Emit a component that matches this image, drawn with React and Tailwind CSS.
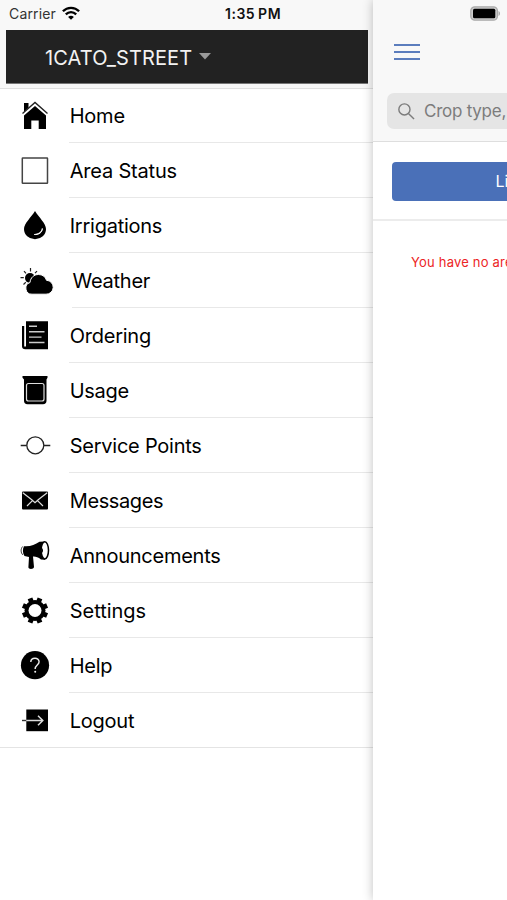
import React from 'react';

const icons = {
  home: (
    <>
      <path d="M24 15h4.500v5L24 24zM24 41V27.500L35 18l11 9.500V41h-7.300v-8.500h-7.400V41z" />
      <path d="M22.500 25.500 35 14.500l12.500 11" fill="none" stroke="#222" strokeWidth="1.400" />
    </>
  ),
  square: <rect x="22.300" y="15" width="25.200" height="25.200" rx=".5" fill="none" stroke="#444" strokeWidth="1.500" />,
  drop: (
    <>
      <path d="M35 13.500C31 20 24 26 24 31.500a11 10.200 0 0 0 22 0C46 26 39 20 35 13.500z" transform="translate(0 -.5)" />
      <path d="M42.300 30.500c-.3 3.300-3.500 5.600-8 6 4.500.5 8-2 8-6z" fill="#fff" stroke="#fff" strokeWidth=".9" />
    </>
  ),
  weather: (
    <>
      <circle cx="30" cy="25" r="5" />
      <path d="M30.500 15v3.500M24 18.200l2 2.200M37 18.200l-2 2M20.500 24.700h3.300M23.500 31.500l2.300-2.200" stroke="#222" strokeWidth="1.200" />
      <path d="M32 41.200a6 6 0 0 1-2-11.700c.5-5 4-8 8.500-8 4 0 7 2.300 8 5.800a6.900 6.900 0 0 1-.5 13.900z" stroke="#fff" strokeWidth="1" />
    </>
  ),
  order: (
    <>
      <path d="M26 13.300h22v28H25.200c-2 0-3.200-1-3.200-3V18h2.200v20.500H26z" />
      <path d="M29 18.300h8M29 23.700h15.500M29 29.100h12.500M29 34.500h15.500" stroke="#ccc" strokeWidth="1.400" />
    </>
  ),
  usage: (
    <>
      <path d="M22.500 13h25v1.800L46.500 16.500v21.300c0 2.300-1.200 3.500-3.500 3.500H27.500c-2.300 0-3.500-1.200-3.500-3.500V16.500L22.500 14.800z" />
      <rect x="26.500" y="20.500" width="17.500" height="17.500" rx="2" fill="none" stroke="#ddd" strokeWidth="1.200" />
    </>
  ),
  service: (
    <g fill="none" stroke="#222" strokeWidth="1.300">
      <circle cx="35.300" cy="27.300" r="8.500" />
      <path d="M20.700 27.500h6M44 27.500h6.300" />
    </g>
  ),
  mail: (
    <>
      <rect x="22" y="18.500" width="26" height="18" rx="1" />
      <path d="m22.800 19.800 9 7 3.200 3 3.200-3 9-7M27 33l5.200-5.200M43 33l-5.200-5.200" fill="none" stroke="#ddd" strokeWidth="1.200" />
    </>
  ),
  horn: (
    <>
      <path d="M24 18.200c6 .6 11-1.400 15.500-4.400l5.500-.3v18.200l-4-.2c-3-2.500-5.500-3.200-8-3l1 10.500c0 2.300-5.600 2.700-5.600.2L29 29l-4.500-1c-2-3-2-7-.5-9.800z" />
      <ellipse cx="44.800" cy="22.300" rx="3.700" ry="8.600" fill="#fff" stroke="#000" strokeWidth="1.500" />
      <path d="M22.600 18.500c-2 2.500-1.900 6 .1 8.300" stroke="#333" fill="none" />
      <path d="M41.500 19.800c2 1 2 4.500 0 5.500z" fill="#000" />
    </>
  ),
  gear: (
    <>
      <g stroke="#000" strokeWidth="5">
        <path d="m30 15.400 10 24.200M40 15.400 30 39.600M22.900 22.500l24.200 10M22.900 32.500l24.200-10" />
      </g>
      <circle cx="35" cy="27.500" r="10.500" />
      <circle cx="35" cy="27.500" r="6.500" fill="#fff" />
    </>
  ),
  help: (
    <>
      <circle cx="35" cy="27.200" r="14.100" />
      <path d="M30.800 24c0-5 8.300-5 8.300-.2 0 3.300-4 3.200-4 7.200" fill="none" stroke="#eee" strokeWidth="1.400" />
      <circle cx="35.200" cy="33.800" r="1" fill="#eee" />
    </>
  ),
  logout: (
    <>
      <rect x="26.300" y="16.500" width="21.700" height="21.700" />
      <path d="M22 27.500h4.300" stroke="#333" strokeWidth="1.400" />
      <path d="M26.300 27.500H43M38 22.800l4.800 4.700-4.800 4.700" fill="none" stroke="#ddd" strokeWidth="1.500" />
    </>
  ),
};

const items = [
  ['Home', 'home', 'tracking-[-0.25px]'],
  ['Area Status', 'square', 'tracking-[-0.2px]'],
  ['Irrigations', 'drop', 'tracking-[-0.25px]'],
  ['Weather', 'weather', 'tracking-[-0.25px]'],
  ['Ordering', 'order', 'tracking-[-0.25px]'],
  ['Usage', 'usage', 'tracking-[-0.3px]'],
  ['Service Points', 'service', 'tracking-[-0.25px]'],
  ['Messages', 'mail', 'tracking-[-0.4px]'],
  ['Announcements', 'horn', 'tracking-[-0.25px]'],
  ['Settings', 'gear', 'tracking-[-0.05px]'],
  ['Help', 'help', 'tracking-[-0.25px]'],
  ['Logout', 'logout', 'tracking-[-0.25px]'],
];

function MenuRow({ label, icon, tracking, last }) {
  const shifted = icon === 'weather';
  return (
    <li className={`flex h-[55px] ${last ? 'border-b border-[#e4e4e4]' : ''}`}>
      <svg viewBox="0 0 56 55" className={`h-[55px] w-14 shrink-0 ${shifted ? 'mr-4' : 'mr-[13px]'}`}>{icons[icon]}</svg>
      <span className={`flex flex-1 items-center whitespace-nowrap pt-[2px] text-[20px] ${shifted ? 'pl-[0.5px]' : 'pl-[0.75px]'} ${tracking} ${last ? '' : 'border-b border-[#e8e8e8]'}`}>
        {label}
      </span>
    </li>
  );
}

function Menu() {
  return (
    <aside className="flex w-[373px] shrink-0 flex-col bg-white">
      <header className="h-[89px] border-b border-[#e0e0e0] bg-[#f8f8f8]">
        <div className="flex h-[30px] items-center pb-[3px] pl-[9px]">
          <span className="w-[53px] whitespace-nowrap text-[14px] tracking-[0.15px] text-[#333]">Carrier</span>
          <svg viewBox="0 0 18 14" className="mb-px h-[14px] w-[18px]" fill="none" stroke="#000" strokeWidth="2.300">
            <path d="M.9 5.300c4.500-4.600 11.700-4.600 16.200 0M3.800 8.400c3-3 7.400-3 10.400 0" />
            <path d="M9 13.800 6.100 10.900c1.700-1.500 4.100-1.500 5.800 0z" fill="#000" stroke="none" />
          </svg>
          <span className="ml-[145px] whitespace-nowrap text-[14px] font-semibold tracking-[0.5px] text-[#111] [word-spacing:-1px]">1:35 PM</span>
        </div>
        <div className="ml-[6px] mr-[5px] flex h-[54px] items-center border-b border-[#777] bg-[#222] pl-[39px]">
          <span className="w-[147px] whitespace-nowrap pt-[2px] text-[20px] tracking-[0.1px] text-[#f2f2f2]">1CATO_STREET</span>
          <svg viewBox="0 0 12 7" className="mb-px ml-[7px] h-[7px] w-3" fill="#999"><path d="M0 0h12L6 6.500z" /></svg>
        </div>
      </header>
      <ul className="-mt-px text-black">
        {items.map(([label, icon, tracking], i) => (
          <MenuRow key={label} label={label} icon={icon} tracking={tracking} last={i === items.length - 1} />
        ))}
      </ul>
    </aside>
  );
}

function Areas() {
  return (
    <main className="z-10 flex w-[134px] shrink-0 flex-col bg-white shadow-[0_0_10px_rgba(0,0,0,0.25)]">
      <header className="flex h-[142px] flex-col border-b border-[#dedede] bg-[#f8f8f8]">
        <div className="flex h-[26px] items-center justify-end pr-[6px]">
          <svg viewBox="0 0 31 15" className="h-[15px] w-[31px]">
            <rect x=".8" y=".8" width="26.600" height="13.400" rx="4" fill="#ccc" stroke="#aaa" strokeWidth="1.300" />
            <rect x="3" y="2.700" width="22.300" height="9.600" rx="1.500" />
            <path d="M28.500 5c2 .7 2 4.300 0 5z" fill="#aaa" />
          </svg>
        </div>
        <div className="ml-[21px] mt-[18px] flex h-4 w-[26px] flex-col justify-between">
          <i className="h-[2px] bg-[#5b7dbd]" />
          <i className="h-[2px] bg-[#5b7dbd]" />
          <i className="h-[2px] bg-[#5b7dbd]" />
        </div>
        <div className="ml-[14px] mt-[33px] flex h-9 items-center overflow-hidden rounded-l-[7px] bg-[#e5e5e5] pl-[11px] text-[#7c7c7c]">
          <svg viewBox="0 0 18 18" className="size-[17px] shrink-0" fill="none" stroke="#7c7c7c" strokeWidth="1.500">
            <circle cx="6.800" cy="6.800" r="5.900" /><path d="m11 11 6 6" />
          </svg>
          <span className="ml-[9px] whitespace-nowrap pt-[2px] text-[17px] tracking-[-0.25px]">Crop type,</span>
        </div>
      </header>
      <section className="h-[79px] border-b-2 border-[#ececec] pl-[19px] pt-5">
        <div className="flex h-[39px] items-center overflow-hidden rounded-l-[4px] bg-[#4a70b8] pb-px pl-[103.5px] text-[16px] text-white">
          <span className="whitespace-nowrap">List</span>
        </div>
      </section>
      <p className="overflow-hidden whitespace-nowrap pl-[38px] pt-[31px] text-[13px] leading-5 tracking-[0.2px] text-[#ec2525]">
        You have no areas
      </p>
    </main>
  );
}

export default function App() {
  return (
    <div className="flex h-[900px] w-[507px] overflow-hidden bg-white font-['Inter','Liberation_Sans',sans-serif]">
      <Menu />
      <Areas />
    </div>
  );
}
